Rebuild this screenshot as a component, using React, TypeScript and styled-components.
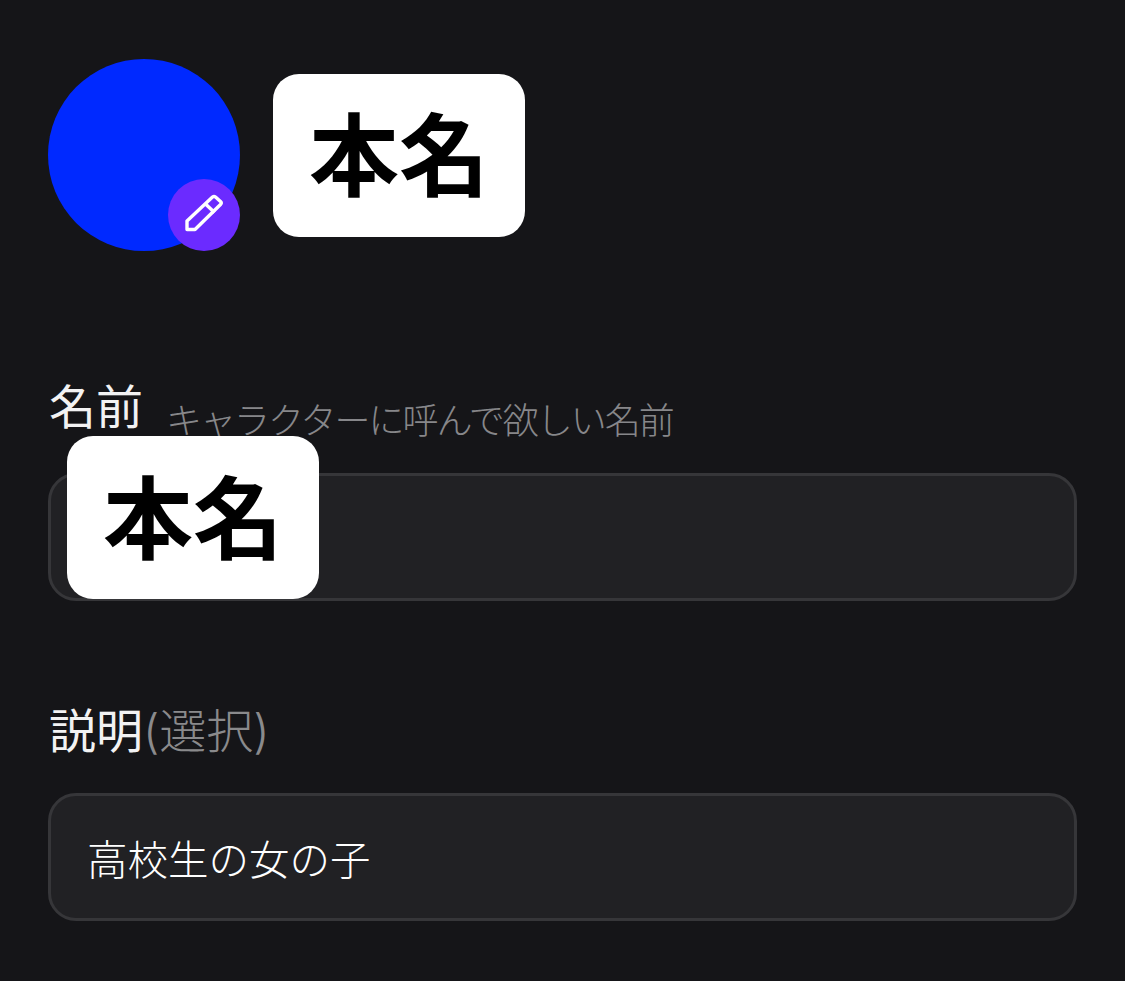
import styled, { createGlobalStyle } from 'styled-components';

const GlobalStyle = createGlobalStyle`
	html, body {
		margin: 0;
		background: #151518;
	}
	* {
		box-sizing: border-box;
	}
`;

const FONT = `'Inter', 'Noto Sans CJK JP', sans-serif`;

const Page = styled.div`
	width: 1125px;
	height: 981px;
	overflow: hidden;
	padding: 59px 48px 0 48px;
	background: #151518;
	font-family: ${FONT};
`;

const Header = styled.div`
	display: flex;
	align-items: center;
	gap: 33px;
	margin-bottom: 125px;
`;

const Avatar = styled.div`
	position: relative;
	width: 192px;
	height: 192px;
	border-radius: 50%;
	background: #0029ff;
`;

const EditBadge = styled.div`
	position: absolute;
	right: 0;
	bottom: 0;
	width: 72px;
	height: 72px;
	border-radius: 50%;
	background: #6b2bff;
`;

const NameTag = styled.div<{ $overlay?: boolean }>`
	display: flex;
	align-items: center;
	justify-content: center;
	width: 252px;
	height: 163px;
	padding-top: 4px;
	border-radius: 26px;
	background: #fff;
	color: #000;
	font-size: 90px;
	font-weight: 700;
	line-height: 1;
	${(p) => p.$overlay && 'position: absolute; left: 19px; top: 60px;'}
`;

const Field = styled.div`
	position: relative;
	margin-bottom: 99px;
`;

const LabelRow = styled.div<{ $gap: number }>`
	display: flex;
	align-items: flex-start;
	margin-bottom: ${(p) => p.$gap}px;
	padding-left: 1px;
`;

const Label = styled.label`
	color: #f2f2f3;
	font-size: 47px;
	line-height: 62px;
`;

const Optional = styled.span`
	color: #8a8a8c;
	font-size: 47px;
	font-weight: 300;
	line-height: 62px;
`;

const Hint = styled.span`
	margin: 14px 0 0 23px;
	color: #87878a;
	font-size: 36px;
	font-weight: 300;
	letter-spacing: -2px;
	line-height: 62px;
`;

const Input = styled.div`
	display: flex;
	align-items: center;
	height: 128px;
	padding: 0 36px;
	border: 3px solid #363639;
	border-radius: 28px;
	background: #212124;
	color: #fff;
	font-size: 40.5px;
	font-weight: 300;
`;

export default function App() {
	return (
		<Page>
			<GlobalStyle />
			<Header>
				<Avatar>
					<EditBadge>
						<svg width="72" height="72" viewBox="0 0 72 72" fill="none" stroke="#fff" strokeWidth="3.4" strokeLinejoin="round">
							<path d="M19 42 L44.5 18 Q46 16.8 47.5 18 L52.5 22.5 Q54 24 52.5 25.5 L27 50.5 L19 50.5 Z" />
							<path d="M37.5 25 L46.5 33.5" />
						</svg>
					</EditBadge>
				</Avatar>
				<NameTag>本名</NameTag>
			</Header>
			<Field>
				<LabelRow $gap={21}>
					<Label>名前</Label>
					<Hint>キャラクターに呼んで欲しい名前</Hint>
				</LabelRow>
				<Input />
				<NameTag $overlay>本名</NameTag>
			</Field>
			<Field>
				<LabelRow $gap={31}>
					<Label>説明</Label>
					<Optional>(選択)</Optional>
				</LabelRow>
				<Input>高校生の女の子</Input>
			</Field>
		</Page>
	);
}
